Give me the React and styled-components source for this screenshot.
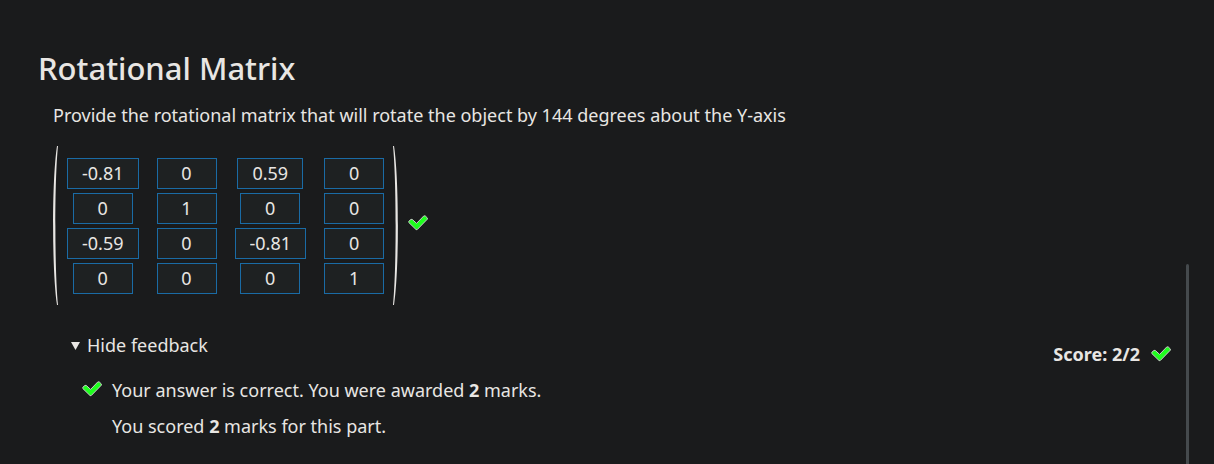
import React, { useState } from "react";
import styled, { createGlobalStyle } from "styled-components";

const GlobalStyle = createGlobalStyle`
  * { box-sizing: border-box; }
  body {
    margin: 0;
    background: #1a1b1c;
    color: #e8e6e3;
    font: 18px/26px "Noto Sans", "Open Sans", sans-serif;
  }
`;

const Page = styled.div`
  display: flex;
  min-height: 100vh;
`;

const Part = styled.main`
  flex: 1;
  min-width: 0;
  padding: 46px 15px 20px 38px;
`;

const ScrollRail = styled.div`
  display: flex;
  flex: none;
  width: 28px;
  padding-top: 264px;
`;

const ScrollThumb = styled.div`
  width: 3px;
  background: #454a4d;
  border-radius: 2px 2px 0 0;
`;

const Title = styled.h1`
  margin: 0;
  font-size: 31px;
  line-height: 44px;
  font-weight: 500;
`;

const Prompt = styled.p`
  margin: 12px 15px 0;
`;

const Answer = styled.div`
  display: flex;
  align-items: center;
  gap: 10px;
  margin: 18px 15px 0;
`;

const Matrix = styled.div`
  display: flex;
  gap: 9px;
`;

const Paren = styled.svg`
  width: 5px;
  fill: #e8e6e3;
  transform: ${(p) => (p.$right ? "scaleX(-1)" : "none")};
`;

const Cells = styled.div`
  display: grid;
  grid-template-columns: repeat(4, auto);
  justify-items: center;
  gap: 4px 18px;
  padding: 12px 0 11px;
`;

const Cell = styled.input`
  field-sizing: content;
  min-width: 60px;
  height: 31px;
  padding: 0 14px 2px;
  border: 1px solid #1a6ba5;
  background: #1e2122;
  color: inherit;
  font: inherit;
  text-align: center;
  outline: none;
`;

const CheckIcon = styled.svg`
  flex: none;
  width: 20px;
  height: 16px;
  margin-bottom: ${(p) => p.$lift || 0}px;
  fill: #1eff1e;
  stroke: #c8d0c8;
  stroke-linejoin: round;
`;

const Results = styled.div`
  display: flex;
  justify-content: space-between;
  align-items: flex-start;
  margin-top: 27px;
`;

const Feedback = styled.section`
  padding-left: 32px;
`;

const Toggle = styled.button`
  display: flex;
  align-items: center;
  gap: 7px;
  padding: 0;
  border: 0;
  background: none;
  color: inherit;
  font: inherit;
  cursor: pointer;
`;

const Arrow = styled.svg`
  width: 10px;
  height: 10px;
  fill: currentColor;
`;

const Messages = styled.div`
  display: grid;
  grid-template-columns: 20px auto;
  align-items: center;
  gap: 10px;
  margin: 19px 0 0 12px;
`;

const Message = styled.p`
  grid-column: 2;
  margin: 0;
`;

const Score = styled.div`
  display: flex;
  align-items: center;
  gap: 11px;
  margin-top: 9px;
  font-weight: 700;
`;

const rows = [
  ["-0.81", "0", "0.59", "0"],
  ["0", "1", "0", "0"],
  ["-0.59", "0", "-0.81", "0"],
  ["0", "0", "0", "1"],
];

function Check({ lift }) {
  return (
    <CheckIcon $lift={lift} viewBox="0 0 20 16" role="img" aria-label="Correct">
      <path d="M.8 7.5V6.3L3 4.4h1.2l4.4 4 7.2-7.5h1.4l2.1 2v1.3L9.2 14.6H8.1z" />
    </CheckIcon>
  );
}

function Parenthesis({ right }) {
  return (
    <Paren $right={right} viewBox="0 0 5 158" preserveAspectRatio="none" aria-hidden="true">
      <path d="M4 0H5C1.5 34 1.5 124 5 158H4C-1.2 124-1.2 34 4 0z" />
    </Paren>
  );
}

export default function App() {
  const [values, setValues] = useState(rows);
  const [open, setOpen] = useState(true);

  const update = (r, c, value) =>
    setValues(values.map((row, i) => row.map((v, j) => (i === r && j === c ? value : v))));

  return (
    <>
      <GlobalStyle />
      <Page>
        <Part>
          <Title>Rotational Matrix</Title>
          <Prompt>
            Provide the rotational matrix that will rotate the object by 144 degrees about the Y-axis
          </Prompt>
          <Answer>
            <Matrix>
              <Parenthesis />
              <Cells>
                {values.map((row, r) =>
                  row.map((value, c) => (
                    <Cell
                      key={`${r}-${c}`}
                      aria-label={`Row ${r + 1}, column ${c + 1}`}
                      value={value}
                      onChange={(e) => update(r, c, e.target.value)}
                    />
                  ))
                )}
              </Cells>
              <Parenthesis right />
            </Matrix>
            <Check lift={6} />
          </Answer>
          <Results>
            <Feedback>
              <Toggle type="button" aria-expanded={open} onClick={() => setOpen(!open)}>
                <Arrow viewBox="0 0 10 10" aria-hidden="true">
                  <path d={open ? "M1 2h9L5.5 10z" : "M1 1v8l9-4z"} />
                </Arrow>
                {open ? "Hide feedback" : "Show feedback"}
              </Toggle>
              {open && (
                <Messages>
                  <Check lift={2} />
                  <Message>
                    Your answer is correct. You were awarded <strong>2</strong> marks.
                  </Message>
                  <Message>
                    You scored <strong>2</strong> marks for this part.
                  </Message>
                </Messages>
              )}
            </Feedback>
            <Score>
              Score: 2/2
              <Check />
            </Score>
          </Results>
        </Part>
        <ScrollRail>
          <ScrollThumb />
        </ScrollRail>
      </Page>
    </>
  );
}
